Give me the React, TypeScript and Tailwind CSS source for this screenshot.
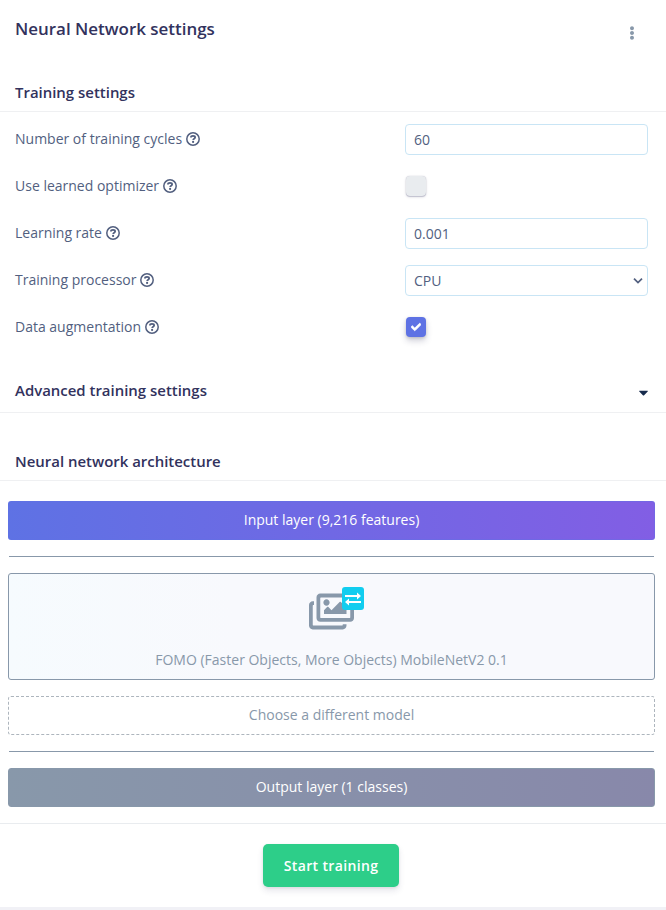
import type { ReactNode } from "react";
import { FaCaretDown, FaCheck, FaEllipsisV, FaRegImages } from "react-icons/fa";

function HelpIcon() {
  return (
    <svg viewBox="0 0 14 14" className="mt-px size-[14px]" fill="none" stroke="currentColor">
      <circle cx="7" cy="7" r="6.2" strokeWidth="1.5" />
      <path d="M4.900 5.500C5 4.300 5.900 3.900 7 3.900c1.200 0 2.100.600 2.100 1.500 0 1.300-1.900 1.300-1.900 2.500" strokeWidth="1.800" />
      <circle cx="7.100" cy="9.900" r="1.100" fill="currentColor" stroke="none" />
    </svg>
  );
}

function Row({ label, children }: { label: string; children: ReactNode }) {
  return (
    <div className="flex h-[47px] items-center pl-[15px] pr-[18px]">
      <label className="flex flex-1 items-center gap-[3.7px] pb-[2px]">
        {label}
        <HelpIcon />
      </label>
      <div className="flex h-[31px] w-[243px] items-center">{children}</div>
    </div>
  );
}

function TextField({ value }: { value: string }) {
  return (
    <input
      type="text"
      defaultValue={value}
      className="h-[31px] w-full rounded border border-[#c9e5f5] bg-white px-2 text-[14px] text-[#525f7f] outline-none"
    />
  );
}

function Heading({ children, className }: { children: ReactNode; className: string }) {
  return (
    <div className={`flex justify-between border-b border-[#eff0f2] pl-[15px] pr-[15px] ${className}`}>
      {children}
    </div>
  );
}

const headingText = "text-[14.95px] leading-[22px] font-semibold text-[#32325d]";

export default function App() {
  return (
    <div className="flex h-[910px] w-[666px] flex-col overflow-hidden bg-white font-['Open_Sans',sans-serif] text-[14px] leading-[21px] text-[#525f7f]">
      <header className="flex h-[81px] justify-between pl-[15px] pr-[27px] pt-[16px]">
        <h2 className="text-[16.96px] leading-[26px] font-semibold text-[#32325d]">Neural Network settings</h2>
        <FaEllipsisV className="mt-[9.500px] size-[14px] text-[#8898aa]" />
      </header>

      <Heading className="h-[31px]">
        <h3 className={headingText}>Training settings</h3>
      </Heading>

      <div className="flex flex-col pt-[4px]">
        <Row label="Number of training cycles">
          <TextField value="60" />
        </Row>
        <Row label="Use learned optimizer">
          <span className="ml-px size-[20px] rounded bg-[#e9ecef] shadow-[0_1px_3px_rgba(50,50,93,.15),0_1px_1px_rgba(50,50,93,.2),0_0_1px_rgba(50,50,93,.3)]" />
        </Row>
        <Row label="Learning rate">
          <TextField value="0.001" />
        </Row>
        <Row label="Training processor">
          <div className="flex h-[31px] w-full items-center justify-between rounded border border-[#c9e5f5] pl-2 pr-[4px]">
            <span>CPU</span>
            <svg viewBox="0 0 10 8" className="mt-[2px] h-[8px] w-[10px]" fill="none" stroke="#525f7f" strokeWidth="1.7">
              <path d="M1 1.6 5 5.6 9 1.6" />
            </svg>
          </div>
        </Row>
        <Row label="Data augmentation">
          <span className="ml-px flex size-[20px] items-center justify-center rounded bg-[#5e72e4] shadow-[0_4px_6px_rgba(50,50,93,.22),0_1px_3px_rgba(0,0,0,.15)]">
            <FaCheck className="size-[10px] stroke-white text-white [stroke-width:40]" />
          </span>
        </Row>
      </div>

      <Heading className="mt-[28px] h-[35px]">
        <h3 className={headingText}>Advanced training settings</h3>
        <FaCaretDown className="mt-[6px] size-[15px] text-[#172b4d]" />
      </Heading>

      <Heading className="mt-[37px] h-[31px]">
        <h3 className={headingText}>Neural network architecture</h3>
      </Heading>

      <section className="flex flex-col pl-[8px] pr-[11px] pt-[20px] text-center">
        <div className="h-[39px] rounded-[3px] border border-[#5e72e4]/40 bg-[linear-gradient(87deg,#5e72e4,#825ee4)] bg-origin-border leading-[36px] text-white">
          Input layer (9,216 features)
        </div>
        <div className="mx-px mt-[16px] h-px bg-[#8898aa]" />
        <div className="mt-[16px] flex h-[107px] flex-col items-center rounded-[3px] border border-[#8898aa] bg-[linear-gradient(87deg,#f6fbfe,#f8f9fd_35%,#f8f9fd)] pt-[15px] text-[#8898aa]">
          <div className="relative h-[44px] w-[45px]">
            <FaRegImages preserveAspectRatio="none" className="mt-[2px] h-[41px] w-[45px]" />
            <span className="absolute left-[33px] top-[-2px] flex h-[23px] w-[22px] items-center justify-center rounded-[3px] bg-[#11cdef]">
              <svg viewBox="0 0 16 14" className="h-[14px] w-[16px]" fill="none" stroke="#fff" strokeWidth="2">
                <path d="M0 4h14M2 10h14" />
                <path d="M12 .5 16 4l-4 3.500zM4 6.500 0 10l4 3.500z" fill="#fff" stroke="none" />
              </svg>
            </span>
          </div>
          <span className="mt-[16px]">FOMO (Faster Objects, More Objects) MobileNetV2 0.1</span>
        </div>
        <div className="mt-[16px] h-[39px] rounded-[3px] border border-dashed border-[#adb5bd] leading-[36px] text-[#8898aa]">
          Choose a different model
        </div>
        <div className="mx-px mt-[16px] h-px bg-[#8898aa]" />
        <div className="mt-[16px] h-[39px] rounded-[3px] border border-[#8898aa] bg-[linear-gradient(87deg,#8898aa,#8888aa)] bg-origin-border leading-[36px] text-white">
          Output layer (1 classes)
        </div>
      </section>

      <footer className="mt-[16px] flex h-[84px] justify-center border-t border-[#e9ecef] pr-[4px] pt-[20px]">
        <button className="h-[43px] w-[136px] rounded-[5px] bg-[#2dce89] text-[14px] font-semibold tracking-[0.35px] text-white shadow-[0_4px_6px_rgba(50,50,93,.11),0_1px_3px_rgba(0,0,0,.08)]">
          Start training
        </button>
      </footer>
      <div className="h-[3px] bg-[#f1f1f6]" />
    </div>
  );
}
